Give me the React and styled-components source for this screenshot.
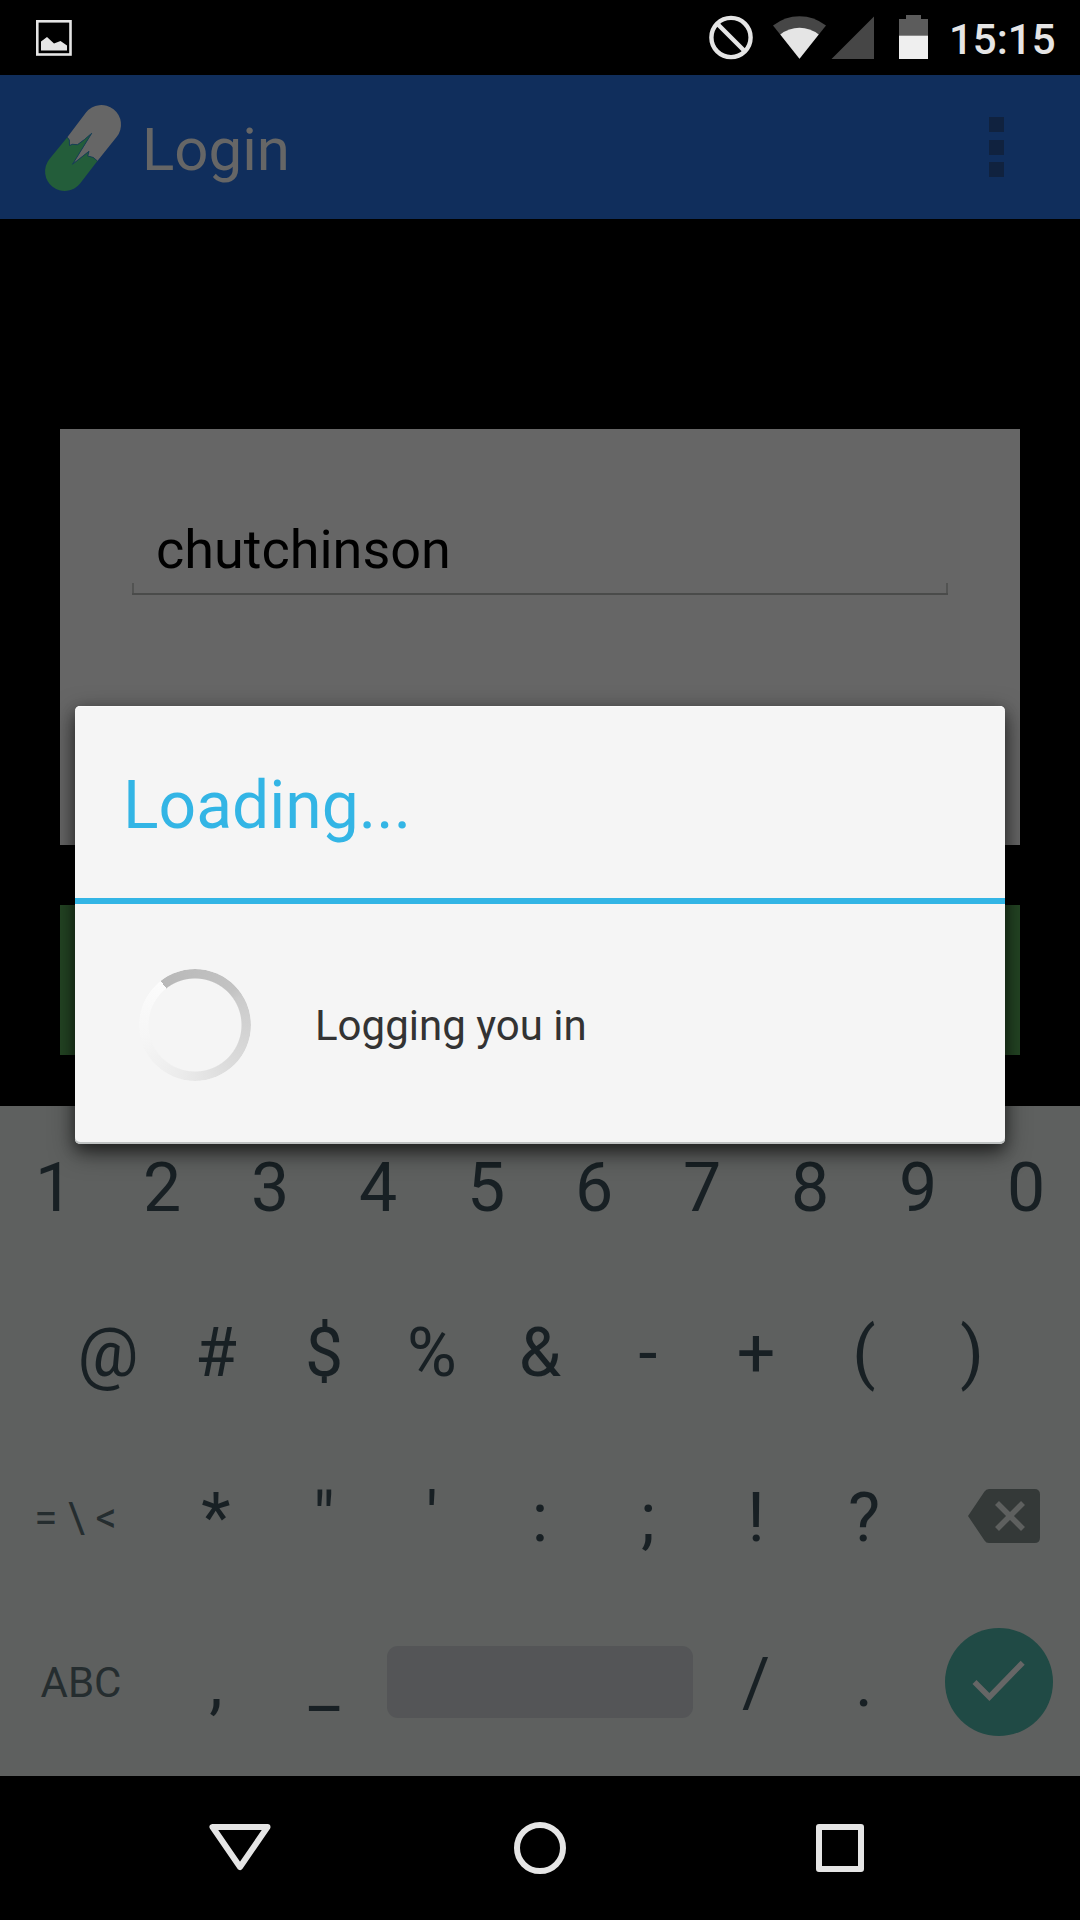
import React from "react";
import styled, { createGlobalStyle } from "styled-components";

const GlobalStyle = createGlobalStyle`
  * { box-sizing: border-box; }
  body { margin: 0; background: #000; }
`;

const Screen = styled.div`
  position: relative;
  display: flex;
  flex-direction: column;
  width: 1080px;
  height: 1920px;
  overflow: hidden;
  background: #000;
  font-family: Roboto, "Liberation Sans", sans-serif;
`;

const StatusBar = styled.header`
  display: flex;
  justify-content: space-between;
  height: 75px;
  padding: 0 24px 0 36px;
`;

const StatusGroup = styled.div`
  display: flex;
`;

const Clock = styled.span`
  padding-top: 4px;
  width: 107px;
  font-size: 42px;
  font-weight: 500;
  line-height: 71px;
  color: #e5e5e5;
  white-space: nowrap;
`;

const AppBar = styled.div`
  display: flex;
  justify-content: space-between;
  height: 144px;
  padding: 0 76px 0 36px;
  background: #102e5c;
`;

const Brand = styled.div`
  display: flex;
  gap: 10px;
`;

const AppTitle = styled.h1`
  margin: 0;
  padding-top: 5px;
  font-size: 60px;
  font-weight: 400;
  line-height: 139px;
  color: #666;
`;

const Overflow = styled.div`
  display: grid;
  grid-template-rows: 15px 15px 15px;
  row-gap: 7.5px;
  padding-top: 42px;
`;

const OverflowDot = styled.i`
  width: 15px;
  height: 15px;
  background: #10223f;
`;

const Content = styled.main`
  display: flex;
  flex-direction: column;
  gap: 60px;
  height: 887px;
  padding: 210px 60px 0;
`;

const Card = styled.section`
  height: 416px;
  padding: 81px 72px 0;
  background: #666;
`;

const Field = styled.div`
  height: 85px;
  padding: 0 24px;
  font-size: 54px;
  line-height: 79px;
  color: #000;
  background:
    linear-gradient(#4a4b4a, #4a4b4a) bottom / 100% 2px no-repeat,
    linear-gradient(#525352, #525352) left bottom / 2px 12px no-repeat,
    linear-gradient(#525352, #525352) right bottom / 2px 12px no-repeat;
`;

const SubmitButton = styled.div`
  height: 150px;
  background: #244524;
`;

const Keyboard = styled.section`
  display: grid;
  grid-template-rows: 164px 165px 165px 165px;
  height: 670px;
  background: #5e605f;
`;

const KeyRow = styled.div`
  display: flex;
  justify-content: center;
`;

const Key = styled.div`
  display: flex;
  align-items: center;
  justify-content: center;
  width: ${(p) => (p.$wide ? 162 : 108)}px;
  padding-left: ${(p) => (p.$shift > 0 ? p.$shift : 0)}px;
  padding-right: ${(p) => (p.$shift < 0 ? -p.$shift : 0)}px;
  padding-bottom: ${(p) => p.$lift || 0}px;
  font-size: ${(p) => (p.$label ? 42 : 68)}px;
  color: ${(p) => (p.$label ? "#252d2f" : "#182024")};
  white-space: nowrap;
`;

const SpaceKey = styled.div`
  align-self: center;
  width: 306px;
  height: 72px;
  margin: 0 9px 2px;
  border-radius: 11px;
  background: #545557;
`;

const EnterKey = styled.div`
  width: 108px;
  height: 108px;
  border-radius: 50%;
  background: #204a45;
`;

const NavBar = styled.nav`
  display: flex;
  align-items: center;
  justify-content: center;
  gap: 233px;
  height: 144px;
`;

const Dialog = styled.div`
  position: absolute;
  left: 75px;
  top: 706px;
  display: flex;
  flex-direction: column;
  width: 930px;
  height: 438px;
  border-radius: 5px;
  background: #f5f5f5;
  box-shadow:
    inset 0 1px 0 #fbfbfb,
    inset 0 -2px 0 #bfc2c2,
    0 8px 24px rgba(0, 0, 0, 0.55),
    0 6px 14px rgba(0, 0, 0, 0.32);
`;

const DialogTitle = styled.h2`
  height: 198px;
  margin: 0;
  padding: 7px 48px 0;
  border-bottom: 6px solid #33b5e5;
  font-size: 66px;
  font-weight: 400;
  line-height: 185px;
  color: #33b5e5;
`;

const DialogBody = styled.div`
  display: flex;
  align-items: center;
  gap: 64px;
  flex: 1;
  padding-left: 64px;
`;

const Spinner = styled.div`
  width: 112px;
  height: 112px;
  margin-top: 1px;
  border-radius: 50%;
  background: conic-gradient(
    from -38deg,
    #b8b8b8 0%,
    #c3c3c3 24%,
    #cbcbcb 27%,
    #dcdcdc 50%,
    #ebebeb 65%,
    #f6f6f6 82%,
    #fcfcfc 100%
  );
  mask: radial-gradient(circle, transparent 46px, #000 47px);
`;

const Message = styled.p`
  margin: 0;
  padding-top: 3px;
  font-size: 42px;
  color: #333;
`;

const PictureIcon = () => (
  <svg width="36" height="75" viewBox="36 0 36 75">
    <rect x="37.3" y="21.3" width="33.2" height="33.2" fill="none" stroke="#e5e5e5" strokeWidth="2.6" />
    <path d="M41 50.5V41.5L47 37L54 43.5L60.5 41L67 45.5V50.5Z" fill="#e5e5e5" />
  </svg>
);

const StatusIcons = () => (
  <svg width="240" height="75" viewBox="709 0 240 75">
    <g fill="none" stroke="#e5e5e5" strokeWidth="4.4">
      <circle cx="731" cy="37.5" r="19.6" />
      <path d="M717.5 24L744.5 51" />
    </g>
    <path d="M799.5 58.8L773 25.5Q785 16.2 799.5 16.2T826 25.5Z" fill="#464646" />
    <path d="M799.5 58.8L780.3 34.4Q789 27.7 799.5 27.7T818.7 34.4Z" fill="#e5e5e5" />
    <path d="M831.5 59H874V16.5Z" fill="#464646" />
    <path d="M899 59V19H906V15H921V19H928V59Z" fill="#5c5c5c" />
    <rect x="899" y="35.7" width="29" height="23.3" fill="#efefef" />
  </svg>
);

const PillLogo = () => (
  <svg width="96" height="144" viewBox="36 75 96 144">
    <path d="M67.3 137.3L86 112.5A19.6 19.6 0 1 1 116.8 136.8L97.4 161L93.3 157.5L87.7 156L89 151.3L72.5 164.3L91.7 133.3L84.5 139.5L77.5 144.7L72.5 144.3L69.5 145.5L69.3 140Z" fill="#666" />
    <path d="M67.3 137.3L49.3 159.2A19.6 19.6 0 1 0 80.1 183.5L97.4 161L93.3 157.5L87.7 156L89 151.3L72.5 164.3L91.7 133.3L84.5 139.5L77.5 144.7L72.5 144.3L69.5 145.5L69.3 140Z" fill="#235d3a" />
    <path d="M67.3 137.3L69.3 140L69.5 145.5L72.5 144.3L77.5 144.7L84.5 139.5L91.7 133.3L72.5 164.3L89 151.3L87.7 156L93.3 157.5L97.4 161" fill="none" stroke="#173f56" strokeWidth="1" />
  </svg>
);

const DeleteIcon = () => (
  <svg width="72" height="54" viewBox="0 0 72 54">
    <path d="M0 27L16.5 2.5Q18 0 21 0H66.5Q72 0 72 5.5V48.5Q72 54 66.5 54H21Q18 54 16.5 51.5Z" fill="#343938" />
    <path d="M29 14L55 40M55 14L29 40" stroke="#5e605f" strokeWidth="5.6" />
  </svg>
);

const CheckIcon = () => (
  <svg width="108" height="108" viewBox="0 0 108 108">
    <path d="M29.5 54L44.4 69L77.7 34.7" fill="none" stroke="#666" strokeWidth="5.6" />
  </svg>
);

const BackIcon = () => (
  <svg width="62" height="52" viewBox="209 1822 62 52">
    <path d="M212.5 1827H267.5L240 1867Z" fill="none" stroke="#e5e5e5" strokeWidth="6" strokeLinejoin="round" />
  </svg>
);

const HomeIcon = () => (
  <svg width="72" height="52" viewBox="504 1822 72 52">
    <circle cx="540" cy="1848" r="23" fill="none" stroke="#e5e5e5" strokeWidth="6" />
  </svg>
);

const RecentsIcon = () => (
  <svg width="62" height="52" viewBox="809 1822 62 52">
    <rect x="819" y="1827" width="42" height="42" fill="none" stroke="#e5e5e5" strokeWidth="6" strokeLinejoin="round" />
  </svg>
);

const Keys = ({ chars }) => chars.map((c) => <Key key={c}>{c}</Key>);

export default function App() {
  return (
    <Screen>
      <GlobalStyle />
      <StatusBar>
        <PictureIcon />
        <StatusGroup>
          <StatusIcons />
          <Clock>15:15</Clock>
        </StatusGroup>
      </StatusBar>
      <AppBar>
        <Brand>
          <PillLogo />
          <AppTitle>Login</AppTitle>
        </Brand>
        <Overflow>
          <OverflowDot />
          <OverflowDot />
          <OverflowDot />
        </Overflow>
      </AppBar>
      <Content>
        <Card>
          <Field>chutchinson</Field>
        </Card>
        <SubmitButton />
      </Content>
      <Keyboard>
        <KeyRow>
          <Keys chars={["1", "2", "3", "4", "5", "6", "7", "8", "9", "0"]} />
        </KeyRow>
        <KeyRow>
          <Keys chars={["@", "#", "$", "%", "&", "-", "+", "(", ")"]} />
        </KeyRow>
        <KeyRow>
          <Key $wide $label $shift={-11}>{"= \\ <"}</Key>
          <Keys chars={["*", '"', "'", ":", ";", "!", "?"]} />
          <Key $wide $shift={10} $lift={3}><DeleteIcon /></Key>
        </KeyRow>
        <KeyRow>
          <Key $wide $label>ABC</Key>
          <Keys chars={[",", "_"]} />
          <SpaceKey />
          <Keys chars={["/", "."]} />
          <Key $wide $lift={2}>
            <EnterKey><CheckIcon /></EnterKey>
          </Key>
        </KeyRow>
      </Keyboard>
      <NavBar>
        <BackIcon />
        <HomeIcon />
        <RecentsIcon />
      </NavBar>
      <Dialog role="dialog">
        <DialogTitle>Loading...</DialogTitle>
        <DialogBody>
          <Spinner />
          <Message>Logging you in</Message>
        </DialogBody>
      </Dialog>
    </Screen>
  );
}
